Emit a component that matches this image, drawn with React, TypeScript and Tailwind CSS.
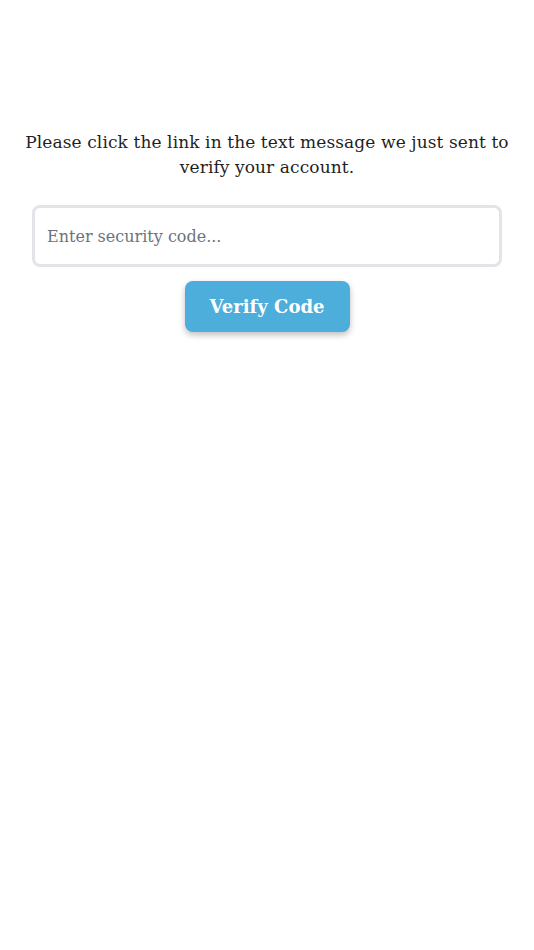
import React, { useState } from "react";

export default function App() {
  const [code, setCode] = useState("");

  return (
    <div
      className="min-h-[950px] w-full bg-white px-8 pt-[130px]"
      style={{ fontFamily: '"DejaVu Serif", "Liberation Serif", serif' }}
    >
      <p className="mx-[-10px] text-center text-[17px] leading-[25px] tracking-[0.1px] text-[#1f1f1f]">
        Please click the link in the text message we just sent to verify your account.
      </p>
      <div className="mt-[25px]">
        <input
          type="text"
          value={code}
          onChange={(e) => setCode(e.target.value)}
          placeholder="Enter security code..."
          className="h-[62px] w-full rounded-lg border-[3px] border-[#e2e4e8] bg-white px-[12px] text-[16px] text-gray-800 placeholder:text-[#6b7280] focus:outline-none"
        />
      </div>
      <div className="mt-[14px] flex justify-center">
        <button
          type="button"
          className="h-[51px] w-[165px] rounded-lg bg-[#4daddb] text-[18px] font-semibold text-white shadow-[0_3px_6px_rgba(0,0,0,0.25)]"
        >
          Verify Code
        </button>
      </div>
    </div>
  );
}
